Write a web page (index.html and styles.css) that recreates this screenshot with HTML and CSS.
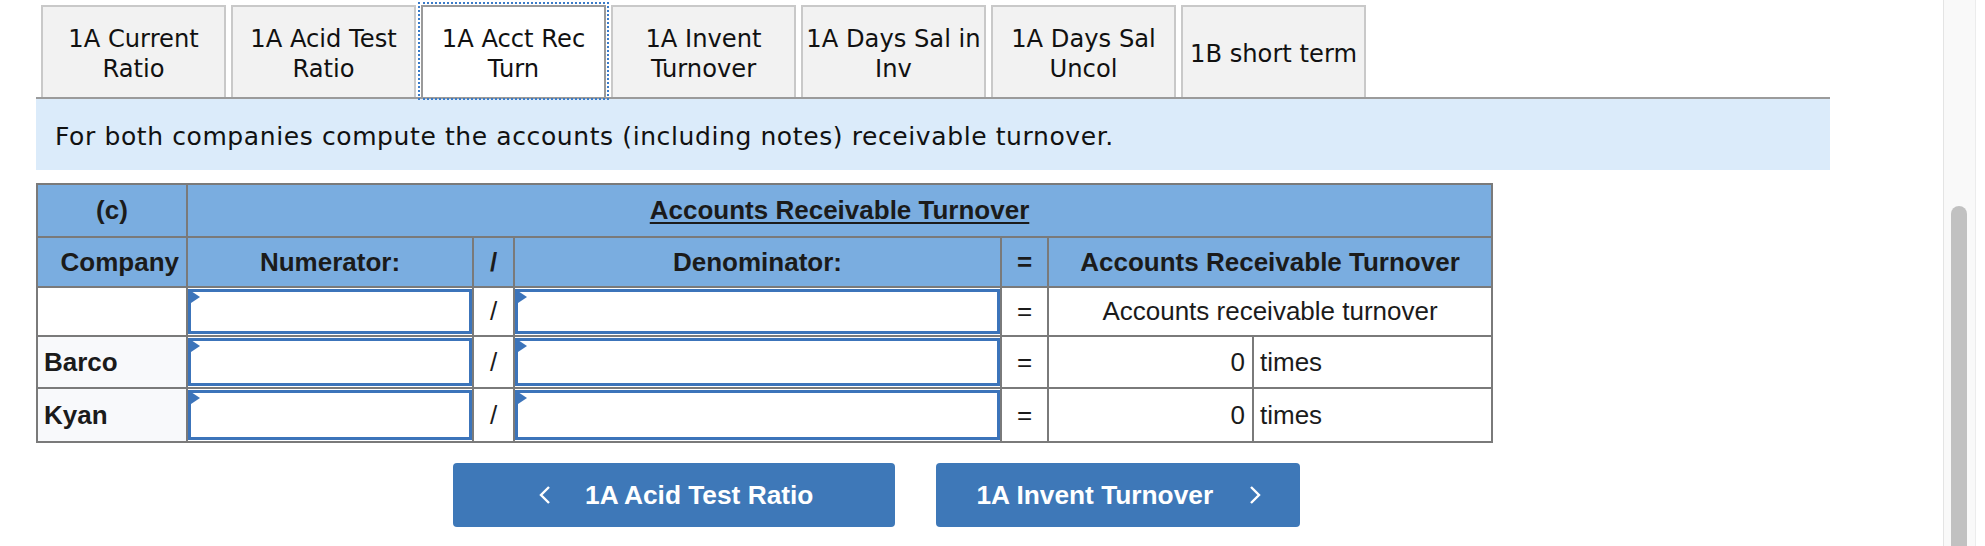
FILE: index.html
```html
<!DOCTYPE html>
<html lang="en">
<head>
<meta charset="utf-8">
<title>Accounts Receivable Turnover</title>
<link rel="stylesheet" href="styles.css">
</head>
<body>
<div class="page">
  <div class="tabs">
    <div class="tab">1A Current<br>Ratio</div>
    <div class="tab">1A Acid Test<br>Ratio</div>
    <div class="tab active">1A Acct Rec<br>Turn</div>
    <div class="tab">1A Invent<br>Turnover</div>
    <div class="tab">1A Days Sal in<br>Inv</div>
    <div class="tab">1A Days Sal<br>Uncol</div>
    <div class="tab">1B short term</div>
  </div>
  <div class="instructions">For both companies compute the accounts (including notes) receivable turnover.</div>
  <table class="grid">
    <colgroup>
      <col class="c-company">
      <col class="c-num">
      <col class="c-op1">
      <col class="c-den">
      <col class="c-op2">
      <col class="c-res-a">
      <col class="c-res-b">
    </colgroup>
    <tr class="h1">
      <th>(c)</th>
      <th colspan="6"><span class="title">Accounts Receivable Turnover</span></th>
    </tr>
    <tr class="h2">
      <th class="company-h">Company</th>
      <th>Numerator:</th>
      <th>/</th>
      <th>Denominator:</th>
      <th>=</th>
      <th colspan="2">Accounts Receivable Turnover</th>
    </tr>
    <tr class="r1">
      <td class="label plain"></td>
      <td class="in"><div class="field"><input type="text"></div></td>
      <td class="op">/</td>
      <td class="in"><div class="field"><input type="text"></div></td>
      <td class="op">=</td>
      <td class="center" colspan="2">Accounts receivable turnover</td>
    </tr>
    <tr class="r2">
      <td class="label">Barco</td>
      <td class="in"><div class="field"><input type="text"></div></td>
      <td class="op">/</td>
      <td class="in"><div class="field"><input type="text"></div></td>
      <td class="op">=</td>
      <td class="num">0</td>
      <td class="unit">times</td>
    </tr>
    <tr class="r3">
      <td class="label">Kyan</td>
      <td class="in"><div class="field"><input type="text"></div></td>
      <td class="op">/</td>
      <td class="in"><div class="field"><input type="text"></div></td>
      <td class="op">=</td>
      <td class="num">0</td>
      <td class="unit">times</td>
    </tr>
  </table>
  <div class="nav">
    <div class="btn prev">
      <svg class="chev" width="14" height="20" viewBox="0 0 14 20"><polyline points="11,2 3,10 11,18" fill="none" stroke="#fff" stroke-width="2.4"/></svg>
      <span>1A Acid Test Ratio</span>
    </div>
    <div class="btn next">
      <span>1A Invent Turnover</span>
      <svg class="chev" width="14" height="20" viewBox="0 0 14 20"><polyline points="3,2 11,10 3,18" fill="none" stroke="#fff" stroke-width="2.4"/></svg>
    </div>
  </div>
</div>
<div class="scrollbar"><div class="thumb"></div></div>
</body>
</html>
```
FILE: styles.css
```css
html, body {
  margin: 0;
  background: #ffffff;
}

.page {
  width: 1794px;
  padding-left: 36px;
}

/* Tabs */
.tabs {
  display: flex;
  gap: 5px;
  padding: 5px 0 0 5px;
  height: 92px;
  border-bottom: 2px solid #9b9b9b;
}

.tab {
  width: 185px;
  height: 92px;
  box-sizing: border-box;
  padding-top: 3px;
  border: 2px solid #c9c9c9;
  border-bottom: none;
  background: #f2f2f2;
  display: flex;
  align-items: center;
  justify-content: center;
  text-align: center;
  white-space: nowrap;
  font-family: "DejaVu Sans", Verdana, sans-serif;
  font-size: 24.2px;
  line-height: 30px;
  color: #111111;
}

.tab.active {
  background: #ffffff;
  border-color: #9a9a9a;
  outline: 2px dotted #3a7bc9;
  outline-offset: 1px;
  position: relative;
  z-index: 1;
}

/* Instructions */
.instructions {
  height: 71px;
  box-sizing: border-box;
  padding-top: 4px;
  background: #dbebfa;
  display: flex;
  align-items: center;
  padding-left: 19px;
  font-family: "DejaVu Sans", Verdana, sans-serif;
  font-size: 25px;
  letter-spacing: 0.6px;
  color: #111111;
}

/* Table */
.grid {
  margin-top: 13px;
  border-collapse: collapse;
  table-layout: fixed;
  width: 1457px;
  font-family: "Liberation Sans", Arial, sans-serif;
  font-size: 26px;
  color: #1b1b1b;
}

.c-company { width: 150px; }
.c-num { width: 286px; }
.c-op1 { width: 41px; }
.c-den { width: 487px; }
.c-op2 { width: 47px; }
.c-res-a { width: 205px; }
.c-res-b { width: 239px; }

.grid th,
.grid td {
  border: 2px solid #7a7a7a;
  padding: 0;
}

.grid th {
  background: #7aade0;
  font-weight: bold;
  text-align: center;
}

.grid th.company-h {
  text-align: right;
  padding-right: 7px;
}

.title {
  text-decoration: underline;
  text-decoration-thickness: 2px;
  text-underline-offset: 3px;
}

.h1 { height: 53px; }
.h2 { height: 50px; }
.r1 { height: 49px; }
.r2 { height: 52px; }
.r3 { height: 54px; }

.grid td.label {
  font-weight: bold;
  padding-left: 6px;
  background: #f8f9fb;
}

.grid td.label.plain {
  background: #ffffff;
}

.grid td.in {
  padding: 1px 0;
}

.field {
  position: relative;
}

.field input {
  display: block;
  width: 100%;
  box-sizing: border-box;
  margin: 0;
  padding: 0 8px;
  border: 3px solid #3c74ba;
  background: #ffffff;
  outline: none;
  font: inherit;
}

.r1 .field input { height: 45px; }
.r2 .field input { height: 48px; }
.r3 .field input { height: 50px; }

.field::before {
  content: "";
  position: absolute;
  left: 0;
  top: 0;
  border-left: 12px solid #3c74ba;
  border-top: 8px solid transparent;
  border-bottom: 8px solid transparent;
  z-index: 1;
}

.grid td.op,
.grid td.center {
  text-align: center;
}

.grid td.num {
  text-align: right;
  padding-right: 7px;
}

.grid td.unit {
  text-align: left;
  padding-left: 6px;
}

/* Navigation buttons */
.nav {
  display: flex;
  gap: 41px;
  margin-top: 20px;
  padding-left: 417px;
}

.btn {
  display: flex;
  align-items: center;
  height: 64px;
  box-sizing: border-box;
  background: #3e78b8;
  border-radius: 4px;
  color: #ffffff;
  font-family: "Liberation Sans", Arial, sans-serif;
  font-weight: bold;
  font-size: 26.3px;
  white-space: nowrap;
}

.btn.prev {
  padding: 0 82px 0 85px;
  gap: 33px;
}

.btn.next {
  padding: 0 38px 0 40px;
  gap: 35px;
}

.chev {
  display: block;
  flex: none;
}

/* Decorative browser scrollbar */
.scrollbar {
  position: fixed;
  top: 0;
  bottom: 0;
  left: 1943px;
  width: 31px;
  background: #f9f9f9;
  border-left: 1px solid #e4e4e4;
  border-right: 1px solid #ececec;
}

.thumb {
  position: absolute;
  left: 7px;
  width: 16px;
  top: 206px;
  bottom: -12px;
  background: #c1c1c1;
  border-radius: 8px;
}
```
